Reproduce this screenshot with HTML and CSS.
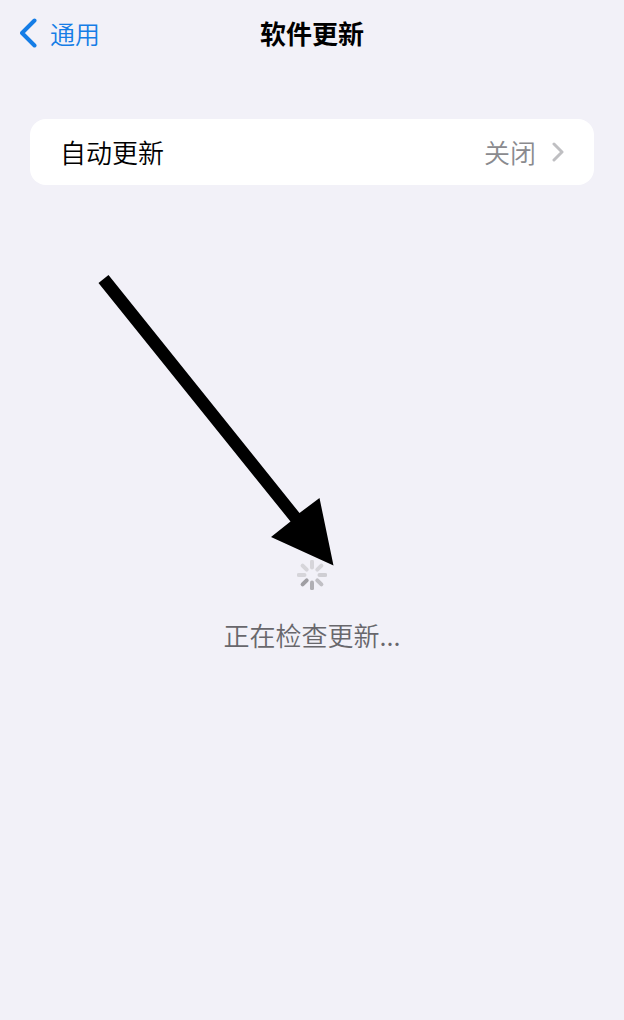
FILE: index.html
```html
<!DOCTYPE html>
<html lang="zh-CN">
<head>
  <meta charset="UTF-8">
  <meta name="viewport" content="width=device-width, initial-scale=1.0">
  <title>软件更新</title>
  <link rel="stylesheet" href="styles.css">
</head>
<body>

  <header class="navbar">
    <a class="back" href="#">
      <svg class="back-icon" width="18" height="30" viewBox="0 0 18 30" aria-hidden="true">
        <path d="M14.5 2.5 L2 15 L14.5 27.5" />
      </svg>
      <span>通用</span>
    </a>
    <h1>软件更新</h1>
  </header>

  <main>
    <a class="row" href="#">
      <span class="row-label">自动更新</span>
      <span class="row-value">关闭</span>
      <svg class="row-icon" width="12" height="20" viewBox="0 0 12 20" aria-hidden="true">
        <path d="M2 2 L10 10 L2 18" />
      </svg>
    </a>

    <section class="status">
      <svg class="spinner" width="30" height="30" viewBox="-15 -15 30 30" aria-hidden="true">
        <path d="M0 -7.5 V-13.3" stroke="#d6d5da" />
        <path d="M0 -7.5 V-13.3" stroke="#d6d5da" transform="rotate(45)" />
        <path d="M0 -7.5 V-13.3" stroke="#cfced3" transform="rotate(90)" />
        <path d="M0 -7.5 V-13.3" stroke="#c0bfc4" transform="rotate(135)" />
        <path d="M0 -7.5 V-13.3" stroke="#b0afb4" transform="rotate(180)" />
        <path d="M0 -7.5 V-13.3" stroke="#9f9ea3" transform="rotate(225)" />
        <path d="M0 -7.5 V-13.3" stroke="#d6d5da" transform="rotate(270)" />
        <path d="M0 -7.5 V-13.3" stroke="#d6d5da" transform="rotate(315)" />
      </svg>
      <p>正在检查更新...</p>

      <!-- arrow pointing at the spinner -->
      <svg class="arrow" width="236" height="292" viewBox="0 0 236 292" aria-hidden="true">
        <path d="M0.5 9 L10.5 1 L201.5 239 L221.5 224 L235.5 291.5 L173 263 L192.5 247.5 Z" />
      </svg>
    </section>
  </main>

</body>
</html>
```

FILE: styles.css
```css
* {
  box-sizing: border-box;
}

body {
  margin: 0;
  min-height: 100vh;
  background-color: #f2f1f8;
  color: #000;
  font-family: "Noto Sans CJK SC", sans-serif;
  font-size: 26px;
  font-weight: 350;
  line-height: 38px;
}

a {
  text-decoration: none;
}

.navbar {
  display: grid;
  grid-template-columns: 1fr auto 1fr;
  align-items: center;
  height: 66px;
  padding: 0 20px;
}

.back {
  display: flex;
  align-items: center;
  gap: 12px;
  color: #157de6;
  font-size: 25px;
}

.back-icon {
  fill: none;
  stroke: #157de6;
  stroke-width: 4;
  stroke-linecap: round;
  stroke-linejoin: round;
}

h1 {
  margin: 0;
  font-size: 26px;
  font-weight: 700;
}

main {
  padding: 53px 30px 0;
}

.row {
  display: flex;
  align-items: center;
  height: 66px;
  padding: 0 30px;
  background-color: #fff;
  border-radius: 16px;
  color: #000;
}

.row-label {
  flex: 1;
}

.row-value {
  color: #8a8a8e;
}

.row-icon {
  margin-left: 16px;
  fill: none;
  stroke: #bfbfc2;
  stroke-width: 3;
  stroke-linecap: round;
  stroke-linejoin: round;
}

.status {
  position: relative;
  display: flex;
  flex-direction: column;
  align-items: center;
  gap: 26px;
  padding-top: 375px;
  color: #68676c;
}

.status p {
  margin: 0;
}

.spinner {
  fill: none;
  stroke-width: 4;
  stroke-linecap: round;
}

.arrow {
  position: absolute;
  top: 89px;
  left: calc(50% - 214px);
}
```
